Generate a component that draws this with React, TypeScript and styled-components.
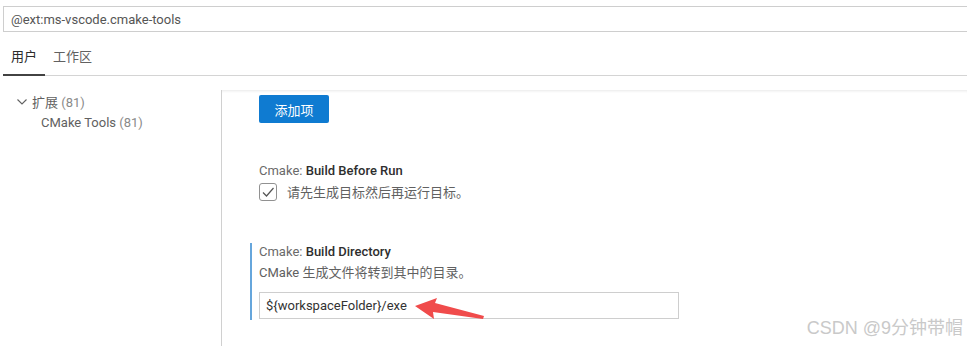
import React from "react";
import styled, { createGlobalStyle } from "styled-components";

const Global = createGlobalStyle`
  html, body { margin: 0; padding: 0; background: #ffffff; }
  body { font-family: Roboto, "Noto Sans CJK SC", sans-serif; font-size: 13px; color: #616161; }
  * { box-sizing: border-box; }
`;

const Page = styled.div`
  position: relative;
  width: 967px;
  height: 346px;
  overflow: hidden;
  background: #fff;
`;

const SearchBox = styled.div`
  margin: 6px 0 0 3px;
  height: 26px;
  border: 1px solid #cecece;
  border-right: none;
  display: flex;
  align-items: center;
  padding-left: 7px;
  font-size: 13px;
  color: #555;
`;

const TabBar = styled.div`
  margin: 0 0 0 3px;
  height: 44px;
  display: flex;
  align-items: flex-end;
  border-bottom: 1px solid #d4d4d4;
`;

const Tab = styled.div<{ $active?: boolean }>`
  padding: 0 8px 9px 8px;
  font-size: 13px;
  color: ${(p) => (p.$active ? "#2b2b2b" : "#616161")};
  margin-bottom: -1px;
  border-bottom: 1px solid ${(p) => (p.$active ? "#424242" : "transparent")};
  box-shadow: ${(p) => (p.$active ? "inset 0 -1px 0 #424242" : "none")};
  line-height: 18px;
`;

const Body = styled.div`
  display: flex;
  margin-top: 14px;
  height: 257px;
`;

const Tree = styled.div`
  width: 221px;
  padding-top: 1px;
  flex-shrink: 0;
`;

const TreeRow = styled.div<{ $indent: number }>`
  display: flex;
  align-items: center;
  height: 21px;
  padding-left: ${(p) => p.$indent}px;
  font-size: 13px;
  color: #616161;
  gap: 4px;
`;

const Count = styled.span`
  color: #8a8a8a;
`;

const Content = styled.div`
  flex: 1;
  border-left: 1px solid #d0d0d0;
  box-shadow: inset 0 3px 3px -2px #e8e8e8;
  padding-top: 5px;
  padding-left: 28px;
`;

const AddButton = styled.button`
  margin-left: 9px;
  width: 70px;
  height: 28px;
  border: none;
  border-radius: 2px;
  background: #0f7bd1;
  color: #fff;
  font-family: "Noto Sans CJK SC", sans-serif;
  font-size: 13px;
  padding: 0;
`;

const Setting = styled.div<{ $modified?: boolean; $top: number }>`
  margin-top: ${(p) => p.$top}px;
  padding-left: 7px;
  border-left: 2px solid ${(p) => (p.$modified ? "#66a6dc" : "transparent")};
  padding-bottom: 1px;
`;

const Title = styled.div`
  font-size: 13px;
  line-height: 18px;
  color: #6a6a6a;
  font-weight: 400;
`;

const TitleStrong = styled.span`
  color: #2e2e2e;
  font-weight: 500;
`;

const CheckRow = styled.label`
  display: flex;
  align-items: center;
  margin-top: 2px;
  gap: 10px;
  font-size: 13px;
  color: #616161;
`;

const CheckBox = styled.span`
  width: 18px;
  height: 18px;
  border: 1px solid #919191;
  border-radius: 3px;
  display: flex;
  align-items: center;
  justify-content: center;
`;

const Desc = styled.div`
  font-size: 13px;
  line-height: 18px;
  color: #616161;
  margin-top: 3px;
`;

const TextInput = styled.div`
  margin-top: 10px;
  width: 420px;
  height: 27px;
  border: 1px solid #cecece;
  display: flex;
  align-items: center;
  padding-left: 6px;
  font-size: 13px;
  color: #333;
`;

const Arrow = styled.svg`
  position: absolute;
  left: 410px;
  top: 294px;
`;

const Watermark = styled.div`
  position: absolute;
  right: 4px;
  bottom: 7px;
  font-family: "Liberation Sans", "Noto Sans CJK SC", sans-serif;
  font-size: 18px;
  color: #c9c9c9;
`;

export default function App() {
  return (
    <Page>
      <Global />
      <SearchBox>@ext:ms-vscode.cmake-tools</SearchBox>
      <TabBar>
        <Tab $active>用户</Tab>
        <Tab>工作区</Tab>
      </TabBar>
      <Body>
        <Tree>
          <TreeRow $indent={16}>
            <svg width="12" height="12" viewBox="0 0 12 12">
              <path d="M1.5 3.5 L6 8 L10.5 3.5" fill="none" stroke="#616161" strokeWidth="1.1" />
            </svg>
            <span>
              扩展 <Count>(81)</Count>
            </span>
          </TreeRow>
          <TreeRow $indent={41}>
            <span>
              CMake Tools <Count>(81)</Count>
            </span>
          </TreeRow>
        </Tree>
        <Content>
          <AddButton>添加项</AddButton>
          <Setting $top={39}>
            <Title>
              Cmake: <TitleStrong>Build Before Run</TitleStrong>
            </Title>
            <CheckRow>
              <CheckBox>
                <svg width="14" height="14" viewBox="0 0 14 14">
                  <path d="M2 7.5 L5.5 11 L12.5 3" fill="none" stroke="#555" strokeWidth="1.2" />
                </svg>
              </CheckBox>
              请先生成目标然后再运行目标。
            </CheckRow>
          </Setting>
          <Setting $top={41} $modified>
            <Title>
              Cmake: <TitleStrong>Build Directory</TitleStrong>
            </Title>
            <Desc>CMake 生成文件将转到其中的目录。</Desc>
            <TextInput>{"${workspaceFolder}/exe"}</TextInput>
          </Setting>
        </Content>
      </Body>
      <Arrow width="80" height="30" viewBox="0 0 80 30">
        <path d="M5 12 L27 4 L25 9 L74 22 L73 25 L23 18 L24 25 Z" fill="#f04b4b" />
      </Arrow>
      <Watermark>CSDN @9分钟带帽</Watermark>
    </Page>
  );
}
